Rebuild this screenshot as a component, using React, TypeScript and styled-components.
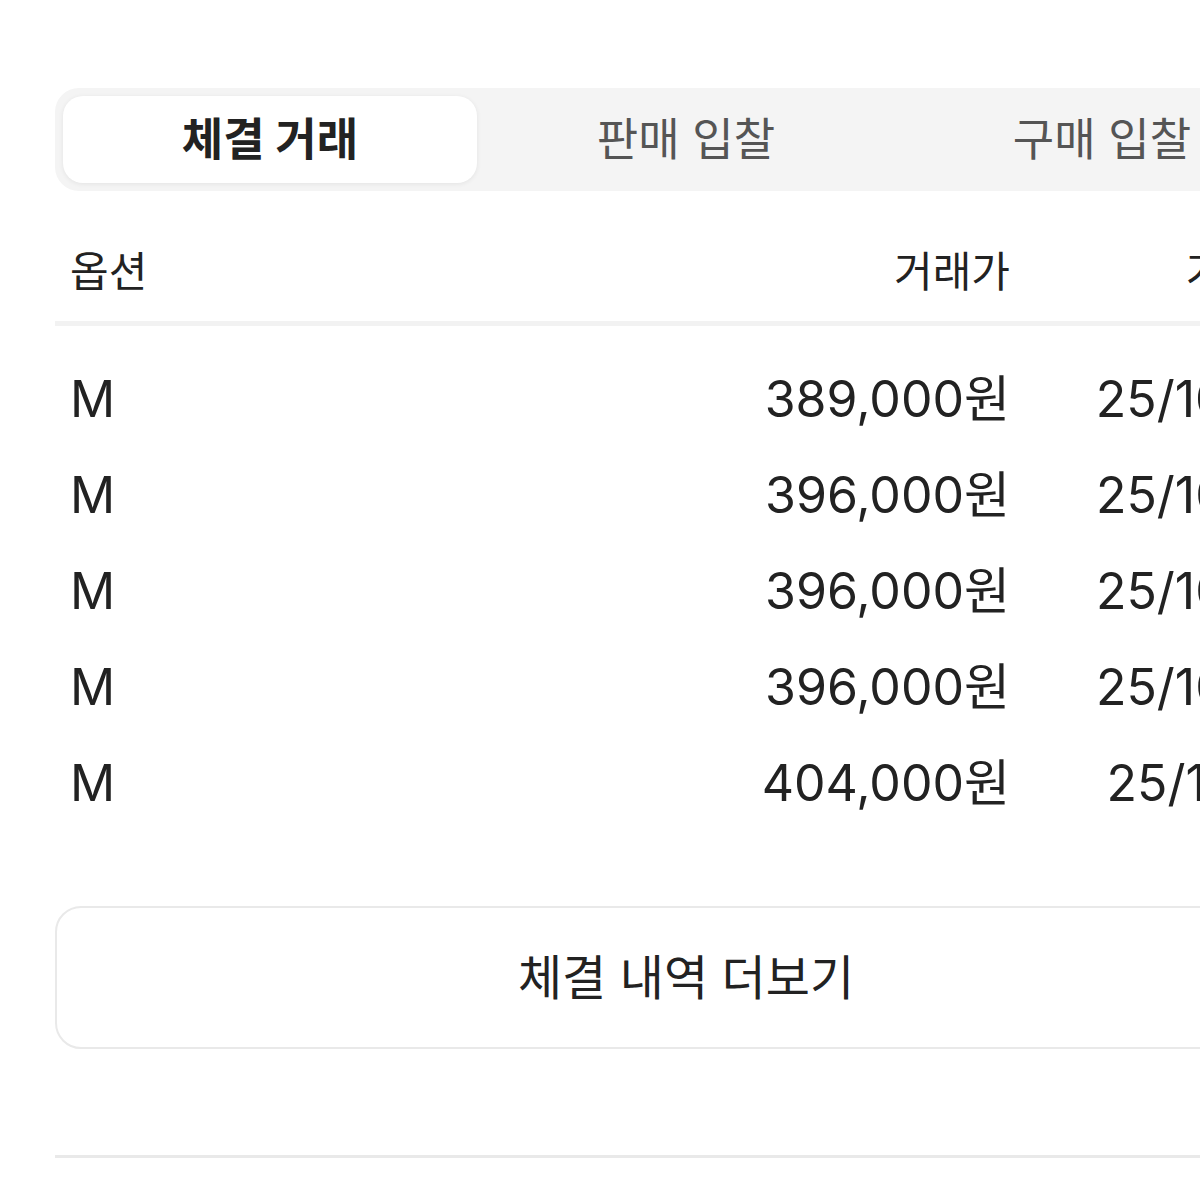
import * as React from 'react'
import styled, { createGlobalStyle } from 'styled-components'

const GlobalStyle = createGlobalStyle`
  html, body {
    margin: 0;
    padding: 0;
    background: #ffffff;
    overflow: hidden;
  }
  body {
    font-family: Inter, "Noto Sans CJK KR", sans-serif;
    color: #222222;
  }
`

const Page = styled.div`
  width: 1262px;
  padding: 88px 0 40px 55px;
`

const TabBar = styled.div`
  display: flex;
  gap: 2px;
  padding: 8px;
  background-color: #f4f4f4;
  border-radius: 24px;
`

const Tab = styled.div<{ $active?: boolean }>`
  flex: 1;
  height: 87px;
  display: flex;
  align-items: center;
  justify-content: center;
  border-radius: 20px;
  font-size: 45px;
  line-height: 1.2;
  font-weight: ${p => (p.$active ? 700 : 400)};
  color: ${p => (p.$active ? '#222222' : '#555555')};
  background-color: ${p => (p.$active ? '#ffffff' : 'transparent')};
  box-shadow: ${p => (p.$active ? '0 1px 5px rgba(0, 0, 0, 0.07)' : 'none')};
`

const HeadRow = styled.div`
  display: grid;
  grid-template-columns: 1fr 250px 292px;
  align-items: center;
  height: 96px;
  margin-top: 33px;
  padding: 0 15px;
  font-size: 42px;
  line-height: 1.2;
  color: #222222;
`

const Divider = styled.div`
  height: 5px;
  margin-top: 1px;
  background-color: #f2f2f2;
`

const Body = styled.div`
  padding-top: 25px;
`

const Row = styled.div`
  display: grid;
  grid-template-columns: 1fr 250px 292px;
  align-items: center;
  height: 96px;
  padding: 0 15px;
  font-size: 50px;
  line-height: 1.2;
  color: #222222;
`

const Cell = styled.div<{ $align?: 'left' | 'right' }>`
  text-align: ${p => p.$align || 'left'};
  white-space: nowrap;
`

const DateCell = styled(Cell)`
  padding-right: 6px;
`

const MoreButton = styled.div`
  margin-top: 75px;
  height: 139px;
  display: flex;
  align-items: center;
  justify-content: center;
  border: 2px solid #e9e9e9;
  border-radius: 26px;
  font-size: 48px;
  line-height: 1.2;
  color: #222222;
`

const BottomLine = styled.div`
  margin-top: 106px;
  height: 3px;
  background-color: #e9e9e9;
`

const trades = [
  { option: 'M', price: '389,000원', date: '25/10/19' },
  { option: 'M', price: '396,000원', date: '25/10/18' },
  { option: 'M', price: '396,000원', date: '25/10/18' },
  { option: 'M', price: '396,000원', date: '25/10/18' },
  { option: 'M', price: '404,000원', date: '25/10/11' }
]

export default function App() {
  return (
    <>
      <GlobalStyle />
      <Page>
        <TabBar>
          <Tab $active>체결 거래</Tab>
          <Tab>판매 입찰</Tab>
          <Tab>구매 입찰</Tab>
        </TabBar>
        <HeadRow>
          <Cell>옵션</Cell>
          <Cell $align="right">거래가</Cell>
          <Cell $align="right">거래일</Cell>
        </HeadRow>
        <Divider />
        <Body>
          { trades.map((t, i) => (
            <Row key={ i }>
              <Cell>{ t.option }</Cell>
              <Cell $align="right">{ t.price }</Cell>
              <DateCell $align="right">{ t.date }</DateCell>
            </Row>
          )) }
        </Body>
        <MoreButton>체결 내역 더보기</MoreButton>
        <BottomLine />
      </Page>
    </>
  )
}
